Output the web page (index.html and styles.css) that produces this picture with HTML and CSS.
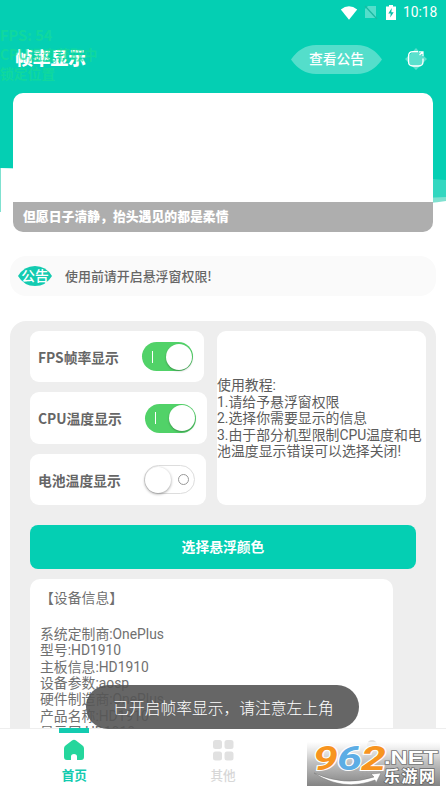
FILE: index.html
```html
<!DOCTYPE html>
<html lang="zh-CN">
<head>
<meta charset="utf-8">
<title>帧率显示</title>
<link rel="stylesheet" href="styles.css">
</head>
<body>
<div class="screen">
  <svg class="waves" width="446" height="215" viewBox="0 0 446 215">
    <path d="M0 0H446V201Q430 204 400 204V160H20V168L1 168V212H0Z" fill="#7fe1d0"/>
    <path d="M0 0H446V197L400 199V160H20V168H0Z" fill="#33d7c0"/>
    <path d="M0 0H446V180Q433 179 410 177L20 169Q12 168 0 168Z" fill="#04cfb3"/>
  </svg>
  <div class="status">
    <svg width="18" height="14" viewBox="0 0 18 14"><path d="M.8 3.5Q9-3.2 17.2 3.5L9 13.7Z" fill="#fff"/></svg>
    <svg class="sim" width="14" height="15" viewBox="0 0 14 15"><path d="M4 1h8v12H1V4Z" fill="#fff" opacity=".32"/><path d="M1 1L13 14" stroke="#1bb9a2" stroke-width="1.2"/></svg>
    <svg class="battery" width="10" height="15" viewBox="0 0 10 15"><path d="M3 0h4v1.5h3V15H0V1.5h3Z" fill="#fff"/><path d="M5.8 3L2.3 8.5h2.4L4.2 12.5L7.7 7.2H5.3Z" fill="#04bfa6"/></svg>
    <span>10:18</span>
  </div>
  <header class="header">
    <h1>帧率显示</h1>
    <div class="notice-button">
      <svg width="91" height="29" viewBox="0 0 91 29"><path d="M0 14.5Q10 0 25 0H66Q81 0 91 14.5Q81 29 66 29H25Q10 29 0 14.5Z" fill="#fff" fill-opacity=".32"/></svg>
      <span>查看公告</span>
    </div>
    <svg class="share" width="22" height="22" viewBox="0 0 22 22"><path d="M11 0Q15 5 22 11Q17 16 11 22Q6 17 0 11Q6 6 11 0Z" fill="#fff" fill-opacity=".35"/><path d="M13 3.7H8Q3.5 3.7 3.5 8.2V13.5Q3.5 18 8 18H13.5Q18 18 18 13.5V10.5" fill="none" stroke="#fff" stroke-width="1.3"/><path d="M14.5 7L17.5 4M14 3.8H18V8" fill="none" stroke="#fff" stroke-width="1.2"/></svg>
  </header>
  <div class="overlay"><div class="fps-line">FPS: 54</div><div>CPU温度获取中</div><div>锁定位置</div></div>

  <section class="banner"><p>但愿日子清静，抬头遇见的都是柔情</p></section>

  <section class="notice">
    <div class="tag"><svg width="34" height="20" viewBox="0 0 34 20"><path d="M0 10Q6 0 17 0Q28 0 34 10Q28 20 17 20Q6 20 0 10Z" fill="#13cbb0"/></svg><span>公告</span></div>
    <span>使用前请开启悬浮窗权限!</span>
  </section>

  <main class="panel">
    <div class="top">
      <div class="options">
        <div class="option fps"><span>FPS帧率显示</span><i class="switch on"></i></div>
        <div class="option cpu"><span>CPU温度显示</span><i class="switch on"></i></div>
        <div class="option bat"><span>电池温度显示</span><i class="switch off"></i></div>
      </div>
      <div class="guide">使用教程:<br>1.请给予悬浮窗权限<br>2.选择你需要显示的信息<br>3.由于部分机型限制CPU温度和电<br>池温度显示错误可以选择关闭!</div>
    </div>
    <div class="color-button">选择悬浮颜色</div>
    <div class="device"><p class="device-title">【设备信息】</p>系统定制商:OnePlus<br>型号:HD1910<br>主板信息:HD1910<br>设备参数:aosp<br>硬件制造商:OnePlus<br>产品名称:HD1910<br>显示屏:HD1910</div>
  </main>

  <nav class="tabs">
    <div class="tab active">
      <svg width="22" height="22" viewBox="0 0 22 22"><path d="M9 1.4Q11 0 13 1.4L19.5 6.5Q21 7.7 21 9.5V18Q21 21 18 21H14V17.5Q14 15 11 15Q8 15 8 17.5V21H4Q1 21 1 18V9.5Q1 7.7 2.5 6.5Z" fill="#25d69c"/></svg>
      <span>首页</span>
    </div>
    <div class="tab">
      <svg width="22" height="22" viewBox="0 0 22 22" fill="#e1e1e1"><rect x="1" y="1" width="9" height="9" rx="2.5"/><rect x="12.5" y="1" width="9" height="9" rx="2.5"/><rect x="1" y="12.5" width="9" height="9" rx="2.5"/><rect x="12.5" y="12.5" width="9" height="9" rx="2.5"/></svg>
      <span>其他</span>
    </div>
    <div class="tab">
      <svg width="22" height="22" viewBox="0 0 22 22" fill="#e1e1e1"><circle cx="11" cy="6" r="5"/><path d="M2 21Q2 12 11 12Q20 12 20 21Z"/></svg>
      <span>我的</span>
    </div>
  </nav>

  <div class="toast">已开启帧率显示，请注意左上角</div>

  <svg class="watermark" width="133" height="44" viewBox="0 0 133 44">
    <defs>
      <linearGradient id="shade" x1="0" y1="0" x2="0" y2="1"><stop offset="0" stop-color="#fff" stop-opacity=".7"/><stop offset=".45" stop-color="#bbb" stop-opacity=".9"/><stop offset="1" stop-color="#7d7d7d" stop-opacity=".95"/></linearGradient>
    </defs>
    <rect width="133" height="44" fill="url(#shade)"/>
    <path d="M7 31Q38 45 67 35L64 32L74 31L69 41L68 38Q36 50 7 31Z" fill="#fff" stroke="#777" stroke-width=".5"/>
    <g class="digits">
      <text x="6" y="28" textLength="25" lengthAdjust="spacingAndGlyphs" fill="#f7941f">9</text>
      <text x="30" y="28" textLength="25" lengthAdjust="spacingAndGlyphs" fill="#5cade5">6</text>
      <text x="54" y="28" textLength="25" lengthAdjust="spacingAndGlyphs" fill="#f7941f">2</text>
    </g>
    <text class="net" x="77" y="22" textLength="54" lengthAdjust="spacingAndGlyphs">.NET</text>
    <text class="site" x="77" y="40" textLength="51">乐游网</text>
  </svg>
</div>
</body>
</html>
```

FILE: styles.css
```css
* { box-sizing: border-box; }
body { margin: 0; background: #fff; font-family: Roboto, "Noto Sans CJK SC", sans-serif; color: #666; }
h1, p { margin: 0; }
svg { display: block; flex: none; }
.screen { position: relative; display: flex; flex-direction: column; width: 446px; height: 792px; overflow: hidden; background: #fff; }
.waves { position: absolute; left: 0; top: 0; }
.status { position: relative; display: flex; justify-content: flex-end; align-items: center; height: 25px; padding-right: 8px; color: #fff; flex: none; }
.status span { width: 35px; line-height: 25px; white-space: nowrap; font-size: 13.8px; }
.sim { margin-left: 6px; }
.battery { margin: 0 7px 0 8px; }
.header { position: relative; display: flex; align-items: center; height: 68px; padding: 0 19px 0 15px; flex: none; }
.header h1 { flex: 1; color: #fff; font-size: 17.8px; line-height: 24px; font-weight: 900; }
.notice-button { position: relative; width: 91px; height: 29px; margin-right: 23px; }
.notice-button span { position: absolute; inset: 0; text-align: center; line-height: 28px; font-size: 13.8px; font-weight: 500; color: #fff; }
.overlay { position: absolute; left: 0; top: 25px; color: rgba(22, 220, 150, .7); font-family: "Noto Sans CJK SC", sans-serif; font-size: 13.8px; font-weight: 700; line-height: 19.6px; }
.fps-line { font-size: 14.6px; }
.banner { position: relative; display: flex; align-items: flex-end; width: 420px; height: 139px; margin-left: 13px; background: #fff; border-radius: 10px; overflow: hidden; flex: none; }
.banner p { width: 100%; height: 30px; padding-left: 10px; background: #aeaeae; color: #fff; font-size: 12.85px; line-height: 30px; font-weight: 900; }
.notice { display: flex; align-items: center; width: 426px; height: 40px; margin: 24px 0 0 10px; padding-left: 8px; border-radius: 16px; background: #fafafa; font-family: "Noto Sans CJK SC", sans-serif; font-size: 12.95px; font-weight: 500; flex: none; }
.tag { position: relative; width: 34px; height: 20px; margin-right: 13px; }
.tag span { position: absolute; inset: 0; line-height: 19px; text-align: center; font-size: 13.8px; color: #fff; }
.notice > span { line-height: 20px; }
.panel { width: 426px; height: 407px; margin: 25px 0 0 10px; padding: 10px 10px 0 20px; border-radius: 16px 16px 0 0; background: #eee; overflow: hidden; flex: none; }
.top { display: flex; justify-content: space-between; height: 174px; }
.options { display: flex; flex-direction: column; gap: 10px; }
.option { display: flex; align-items: center; justify-content: space-between; padding: 0 11px 0 8px; background: #fff; border-radius: 9px; font-family: "Noto Sans CJK SC", sans-serif; font-size: 13.8px; font-weight: 700; }
.option span { line-height: 20px; }
.fps { width: 174px; height: 51px; }
.cpu { width: 177px; height: 52px; }
.bat { width: 176px; height: 51px; }
.switch { display: flex; align-items: center; width: 51px; height: 29px; border-radius: 15px; }
.switch.on { justify-content: space-between; padding: 0 1px 0 10px; background: #51d268; }
.switch.on::before { content: ""; width: 1px; height: 12px; background: #fff; }
.switch.on::after { content: ""; width: 26px; height: 26px; border-radius: 50%; background: #fff; box-shadow: 0 1px 2px rgba(0, 0, 0, .3); }
.switch.off { justify-content: space-between; padding-right: 5px; border: 1px solid #ddd; }
.switch.off::before { content: ""; width: 26px; height: 26px; border-radius: 50%; background: #fff; box-shadow: 0 1px 3px rgba(0, 0, 0, .4); }
.switch.off::after { content: ""; width: 9px; height: 9px; border: 1.5px solid #999; border-radius: 50%; }
.guide { width: 209px; height: 174px; padding-top: 46px; background: #fff; border-radius: 9px; font-size: 13.88px; line-height: 16.5px; white-space: nowrap; color: #5c5c5c; }
.color-button { width: 386px; height: 44px; margin-top: 20px; border-radius: 8px; background: #04cfb3; color: #fff; text-align: center; font-size: 13.8px; line-height: 44px; font-weight: 700; }
.device { width: 363px; height: 180px; margin-top: 10px; padding: 11px 10px 0; border-radius: 10px 10px 0 0; background: #fff; font-size: 13.85px; line-height: 16.35px; color: #707070; }
.device-title { height: 36px; }
.tabs { display: grid; grid-template-columns: repeat(3, 148.67px); height: 64px; background: #fff; border-top: 1px solid #eee; flex: none; }
.tab { display: flex; flex-direction: column; align-items: center; padding-top: 10px; font-size: 12.6px; font-weight: 500; color: #d7d7d7; }
.tab span { margin-top: 6px; line-height: 18px; }
.tab.active { padding-top: 0; color: #13cbb0; font-weight: 700; }
.tab.active::before { content: ""; width: 30px; height: 5px; margin: -1px 0 6px; background: #13cbb0; }
.toast { position: absolute; left: 86px; top: 685px; width: 273px; height: 44px; border-radius: 22px; background: rgba(85, 85, 85, .9); color: #fff; text-align: center; font-size: 15.75px; line-height: 45px; font-weight: 300; font-family: "Noto Sans CJK SC", sans-serif; white-space: nowrap; padding-left: 2px; }
.watermark { position: absolute; left: 307px; top: 742px; }
.digits { font: italic 700 33px Roboto, sans-serif; stroke: #fff; stroke-width: 2px; paint-order: stroke; }
.net { font: 700 18px "Liberation Sans", sans-serif; fill: #fff; stroke: #777; stroke-width: 1.5px; paint-order: stroke; }
.site { font: 700 16px "Noto Sans CJK SC", sans-serif; fill: #fff; stroke: #666; stroke-width: 1.5px; paint-order: stroke; }
```
